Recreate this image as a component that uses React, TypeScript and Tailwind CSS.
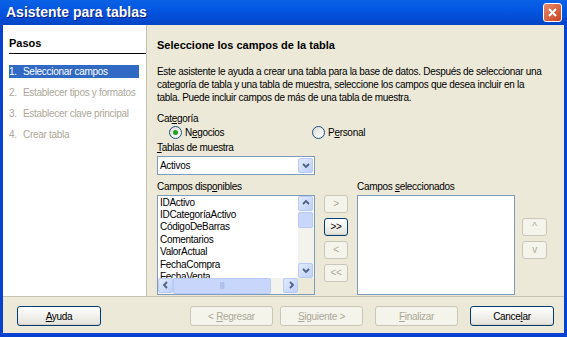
import React from "react";

const font = { fontFamily: '"Liberation Sans", Arial, sans-serif' };

function XpButton({
  label,
  disabled,
  className = "",
}: {
  label: React.ReactNode;
  disabled?: boolean;
  className?: string;
}) {
  return (
    <div
      className={`flex items-center justify-center rounded-[3px] border text-[10px] ${
        disabled
          ? "border-[#c9c7ba] bg-[#f5f4ea] text-[#aca899]"
          : "border-[#003c74] bg-gradient-to-b from-white to-[#e3e2da] text-black shadow-[inset_0_-1px_0_#d6d0c5]"
      } ${className}`}
    >
      {label}
    </div>
  );
}

function Radio({ checked }: { checked?: boolean }) {
  return (
    <span className="flex h-[13px] w-[13px] items-center justify-center rounded-full border border-[#1c5180] bg-gradient-to-br from-[#dcdcd7] to-white">
      {checked && <span className="h-[5px] w-[5px] rounded-full bg-[#21a121]" />}
    </span>
  );
}

function ScrollArrow({ dir }: { dir: "up" | "down" | "left" | "right" }) {
  const paths = {
    up: "M2 6 L5 3 L8 6",
    down: "M2 4 L5 7 L8 4",
    left: "M6 2 L3 5 L6 8",
    right: "M4 2 L7 5 L4 8",
  };
  return (
    <span className="flex h-[15px] w-[15px] shrink-0 items-center justify-center rounded-[2px] border border-[#b7cbf5] bg-gradient-to-br from-[#e1eafe] to-[#bfd0f8]">
      <svg width="10" height="10" viewBox="0 0 10 10">
        <path d={paths[dir]} fill="none" stroke="#4d6185" strokeWidth="1.8" />
      </svg>
    </span>
  );
}

export default function App() {
  const fields = [
    "IDActivo",
    "IDCategoríaActivo",
    "CódigoDeBarras",
    "Comentarios",
    "ValorActual",
    "FechaCompra",
    "FechaVenta",
  ];
  const steps = [
    "Seleccionar campos",
    "Establecer tipos y formatos",
    "Establecer clave principal",
    "Crear tabla",
  ];

  return (
    <div
      style={font}
      className="flex h-[337px] w-[567px] flex-col overflow-hidden bg-[#0841d0] text-[10px] tracking-[-0.3px] text-black"
    >
      {/* title bar */}
      <div className="flex h-[25px] shrink-0 items-center justify-between bg-gradient-to-b from-[#0a62e6] via-[#0353df] to-[#0545c6] pl-[6px] pr-[5px]">
        <span className="text-[14px] font-bold tracking-normal text-white [text-shadow:1px_1px_0_#0a1a80]">
          Asistente para tablas
        </span>
        <span className="flex h-[19px] w-[19px] items-center justify-center rounded-[3px] border border-white bg-gradient-to-br from-[#e88a6a] to-[#c8401c]">
          <svg width="11" height="11" viewBox="0 0 11 11">
            <path d="M2 2 L9 9 M9 2 L2 9" stroke="white" strokeWidth="2" />
          </svg>
        </span>
      </div>

      <div className="mx-[3px] mb-[4px] flex flex-1 flex-col bg-[#ece9d8]">
        <div className="flex h-[272px] shrink-0 overflow-hidden border-b border-[#c5c2b2]">
          {/* left steps */}
          <div className="w-[144px] shrink-0 border-r border-[#c5c2b2] bg-white pl-[6px] pt-[10px]">
            <div className="border-b border-black pb-[1px] text-[11px] font-bold tracking-normal">Pasos</div>
            <div className="mt-[11px] flex flex-col gap-[8px] pr-[7px]">
              {steps.map((s, i) => (
                <div
                  key={s}
                  className={`flex h-[13px] items-center whitespace-nowrap ${
                    i === 0 ? "bg-[#316ac5] text-white" : "text-[#aca899]"
                  }`}
                >
                  <span className="w-[14px] shrink-0">{i + 1}.</span>
                  {s}
                </div>
              ))}
            </div>
          </div>

          {/* right content */}
          <div className="flex flex-1 flex-col pl-[10px] pt-[12px]">
            <div className="text-[11px] font-bold tracking-normal">Seleccione los campos de la tabla</div>
            <p className="mt-[11px] whitespace-nowrap leading-[13px]">
              Este asistente le ayuda a crear una tabla para la base de datos. Después de seleccionar una
              <br />
              categoría de tabla y una tabla de muestra, seleccione los campos que desea incluir en la
              <br />
              tabla. Puede incluir campos de más de una tabla de muestra.
            </p>

            <div className="mt-[8px] leading-[13px]">
              Cat<u>e</u>goría
            </div>
            <div className="flex h-[15px] items-center">
              <div className="ml-[12px] flex w-[143px] items-center gap-[3px]">
                <Radio checked />
                <span>
                  N<u>e</u>gocios
                </span>
              </div>
              <div className="flex items-center gap-[3px]">
                <Radio />
                <span>
                  P<u>e</u>rsonal
                </span>
              </div>
            </div>
            <div className="mt-[1px] leading-[13px]">
              <u>T</u>ablas de muestra
            </div>
            <div className="mt-[2px] flex h-[19px] w-[158px] items-center justify-between border border-[#7f9db9] bg-white pl-[2px] pr-[1px]">
              <span>Activos</span>
              <ScrollArrow dir="down" />
            </div>

            <div className="mt-[5px] flex">
              <div className="w-[167px]">
                <div className="leading-[13px]">
                  Campos disp<u>o</u>nibles
                </div>
                <div className="mt-[2px] flex h-[100px] w-[158px] flex-col border border-[#7f9db9] bg-white">
                  <div className="flex min-h-0 flex-1 overflow-hidden">
                    <div className="flex-1 overflow-hidden pl-[2px] pt-[1px] leading-[12.4px]">
                      {fields.map((f) => (
                        <div key={f}>{f}</div>
                      ))}
                    </div>
                    <div className="flex w-[16px] flex-col bg-[#f3f3ee]">
                      <ScrollArrow dir="up" />
                      <div className="mt-[1px] h-[16px] w-[15px] rounded-[2px] border border-[#b7cbf5] bg-[#c8d6fb]" />
                      <div className="flex-1" />
                      <ScrollArrow dir="down" />
                    </div>
                  </div>
                  <div className="flex h-[16px] shrink-0 bg-[#f3f3ee]">
                    <ScrollArrow dir="left" />
                    <div className="flex flex-1 items-center justify-center rounded-[2px] border border-[#b7cbf5] bg-[#c8d6fb] text-[7px] text-[#8aa4e0]">
                      |||
                    </div>
                    <div className="w-[12px]" />
                    <ScrollArrow dir="right" />
                    <div className="w-[16px] bg-[#ece9d8]" />
                  </div>
                </div>
              </div>

              <div className="mt-[15px] flex w-[33px] flex-col gap-[5px]">
                <XpButton label=">" disabled className="h-[18px] w-[24px]" />
                <XpButton label=">>" className="h-[18px] w-[24px]" />
                <XpButton label="<" disabled className="h-[18px] w-[24px]" />
                <XpButton label="<<" disabled className="h-[18px] w-[24px]" />
              </div>

              <div className="w-[165px]">
                <div className="leading-[13px]">
                  Campos <u>s</u>eleccionados
                </div>
                <div className="mt-[2px] h-[100px] w-[158px] border border-[#7f9db9] bg-white" />
              </div>

              <div className="mt-[38px] flex flex-col gap-[5px]">
                <XpButton label="^" disabled className="h-[18px] w-[25px]" />
                <XpButton label="v" disabled className="h-[18px] w-[25px]" />
              </div>
            </div>
          </div>
        </div>

        {/* bottom buttons */}
        <div className="flex flex-1 items-center pl-[14px] pt-[2px]">
          <XpButton
            label={
              <span>
                <u>A</u>yuda
              </span>
            }
            className="h-[20px] w-[84px]"
          />
          <div className="ml-[89px] flex gap-[7px]">
            <XpButton
              label={
                <span>
                  &lt; <u>R</u>egresar
                </span>
              }
              disabled
              className="h-[20px] w-[83px]"
            />
            <XpButton
              label={
                <span>
                  <u>S</u>iguiente &gt;
                </span>
              }
              disabled
              className="h-[20px] w-[83px]"
            />
          </div>
          <div className="ml-[12px] flex gap-[12px]">
            <XpButton
              label={
                <span>
                  <u>F</u>inalizar
                </span>
              }
              disabled
              className="h-[20px] w-[83px]"
            />
            <XpButton
              label={
                <span>
                  Cance<u>l</u>ar
                </span>
              }
              className="h-[20px] w-[84px]"
            />
          </div>
        </div>
      </div>
    </div>
  );
}
